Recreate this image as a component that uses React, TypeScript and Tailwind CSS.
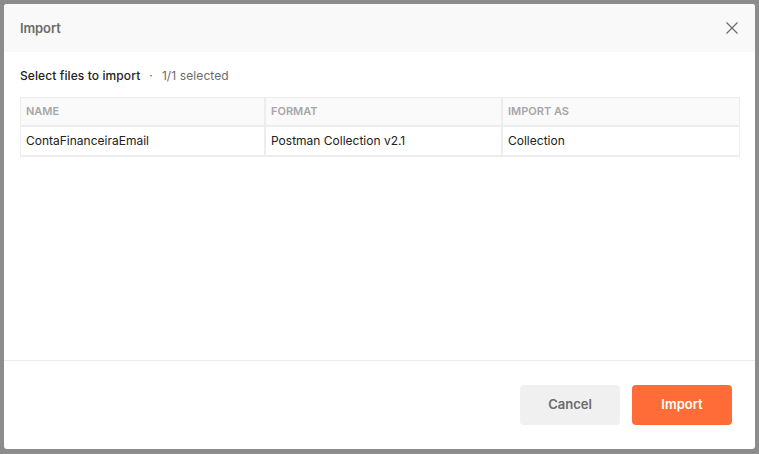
import React from "react";

export default function App() {
  return (
    <div
      className="w-[759px] h-[454px] bg-[#8c8c8c] p-[4px] overflow-hidden"
      style={{ fontFamily: "Inter, 'Noto Sans', sans-serif" }}
    >
      <div className="w-[751px] h-[445px] bg-white rounded-[3px] flex flex-col overflow-hidden">
        <div className="h-[48px] bg-[#f9f9f9] flex items-center justify-between pl-[16px] pr-[14px] pt-[2px] shrink-0">
          <span className="text-[13px] font-semibold text-[#6b6b6b] tracking-[-0.1px]">Import</span>
          <svg width="14" height="14" viewBox="0 0 14 14" className="mr-[2px] mb-[2px]">
            <path d="M1.5 1.5 L12.5 12.5 M12.5 1.5 L1.5 12.5" stroke="#6b6b6b" strokeWidth="1.2" />
          </svg>
        </div>
        <div className="flex-1 px-[16px] pt-[16px]">
          <div className="text-[12px] h-[16px] flex items-center tracking-[0.1px]">
            <span className="font-medium text-[#212121]">Select files to import</span>
            <span className="text-[#6b6b6b] mx-[9px]">·</span>
            <span className="text-[#6b6b6b]">1/1 selected</span>
          </div>
          <div className="mt-[13px] w-[720px] border border-[#ededed]">
            <div className="grid grid-cols-[245px_237px_1fr] h-[29px] bg-[#fafafa] border-b-2 border-[#ededed] text-[11px] font-semibold text-[#a6a6a6]">
              <div className="flex items-center pl-[5px] border-r-2 border-[#ededed]">NAME</div>
              <div className="flex items-center pl-[5px] border-r-2 border-[#ededed]">FORMAT</div>
              <div className="flex items-center pl-[5px]">IMPORT AS</div>
            </div>
            <div className="grid grid-cols-[245px_237px_1fr] h-[29px] text-[12px] text-[#212121] border-b border-[#ededed]">
              <div className="flex items-center pl-[5px] border-r-2 border-[#ededed]">ContaFinanceiraEmail</div>
              <div className="flex items-center pl-[5px] border-r-2 border-[#ededed]">Postman Collection v2.1</div>
              <div className="flex items-center pl-[5px]">Collection</div>
            </div>
          </div>
        </div>
        <div className="h-[89px] border-t border-[#ededed] flex items-start justify-end gap-[12px] pt-[24px] pr-[23px] shrink-0">
          <button className="w-[100px] h-[40px] rounded-[4px] bg-[#f0f0f0] text-[#6b6b6b] text-[13px] font-semibold">
            Cancel
          </button>
          <button className="w-[100px] h-[40px] rounded-[4px] bg-[#ff6c37] text-white text-[13px] font-semibold">
            Import
          </button>
        </div>
      </div>
    </div>
  );
}
